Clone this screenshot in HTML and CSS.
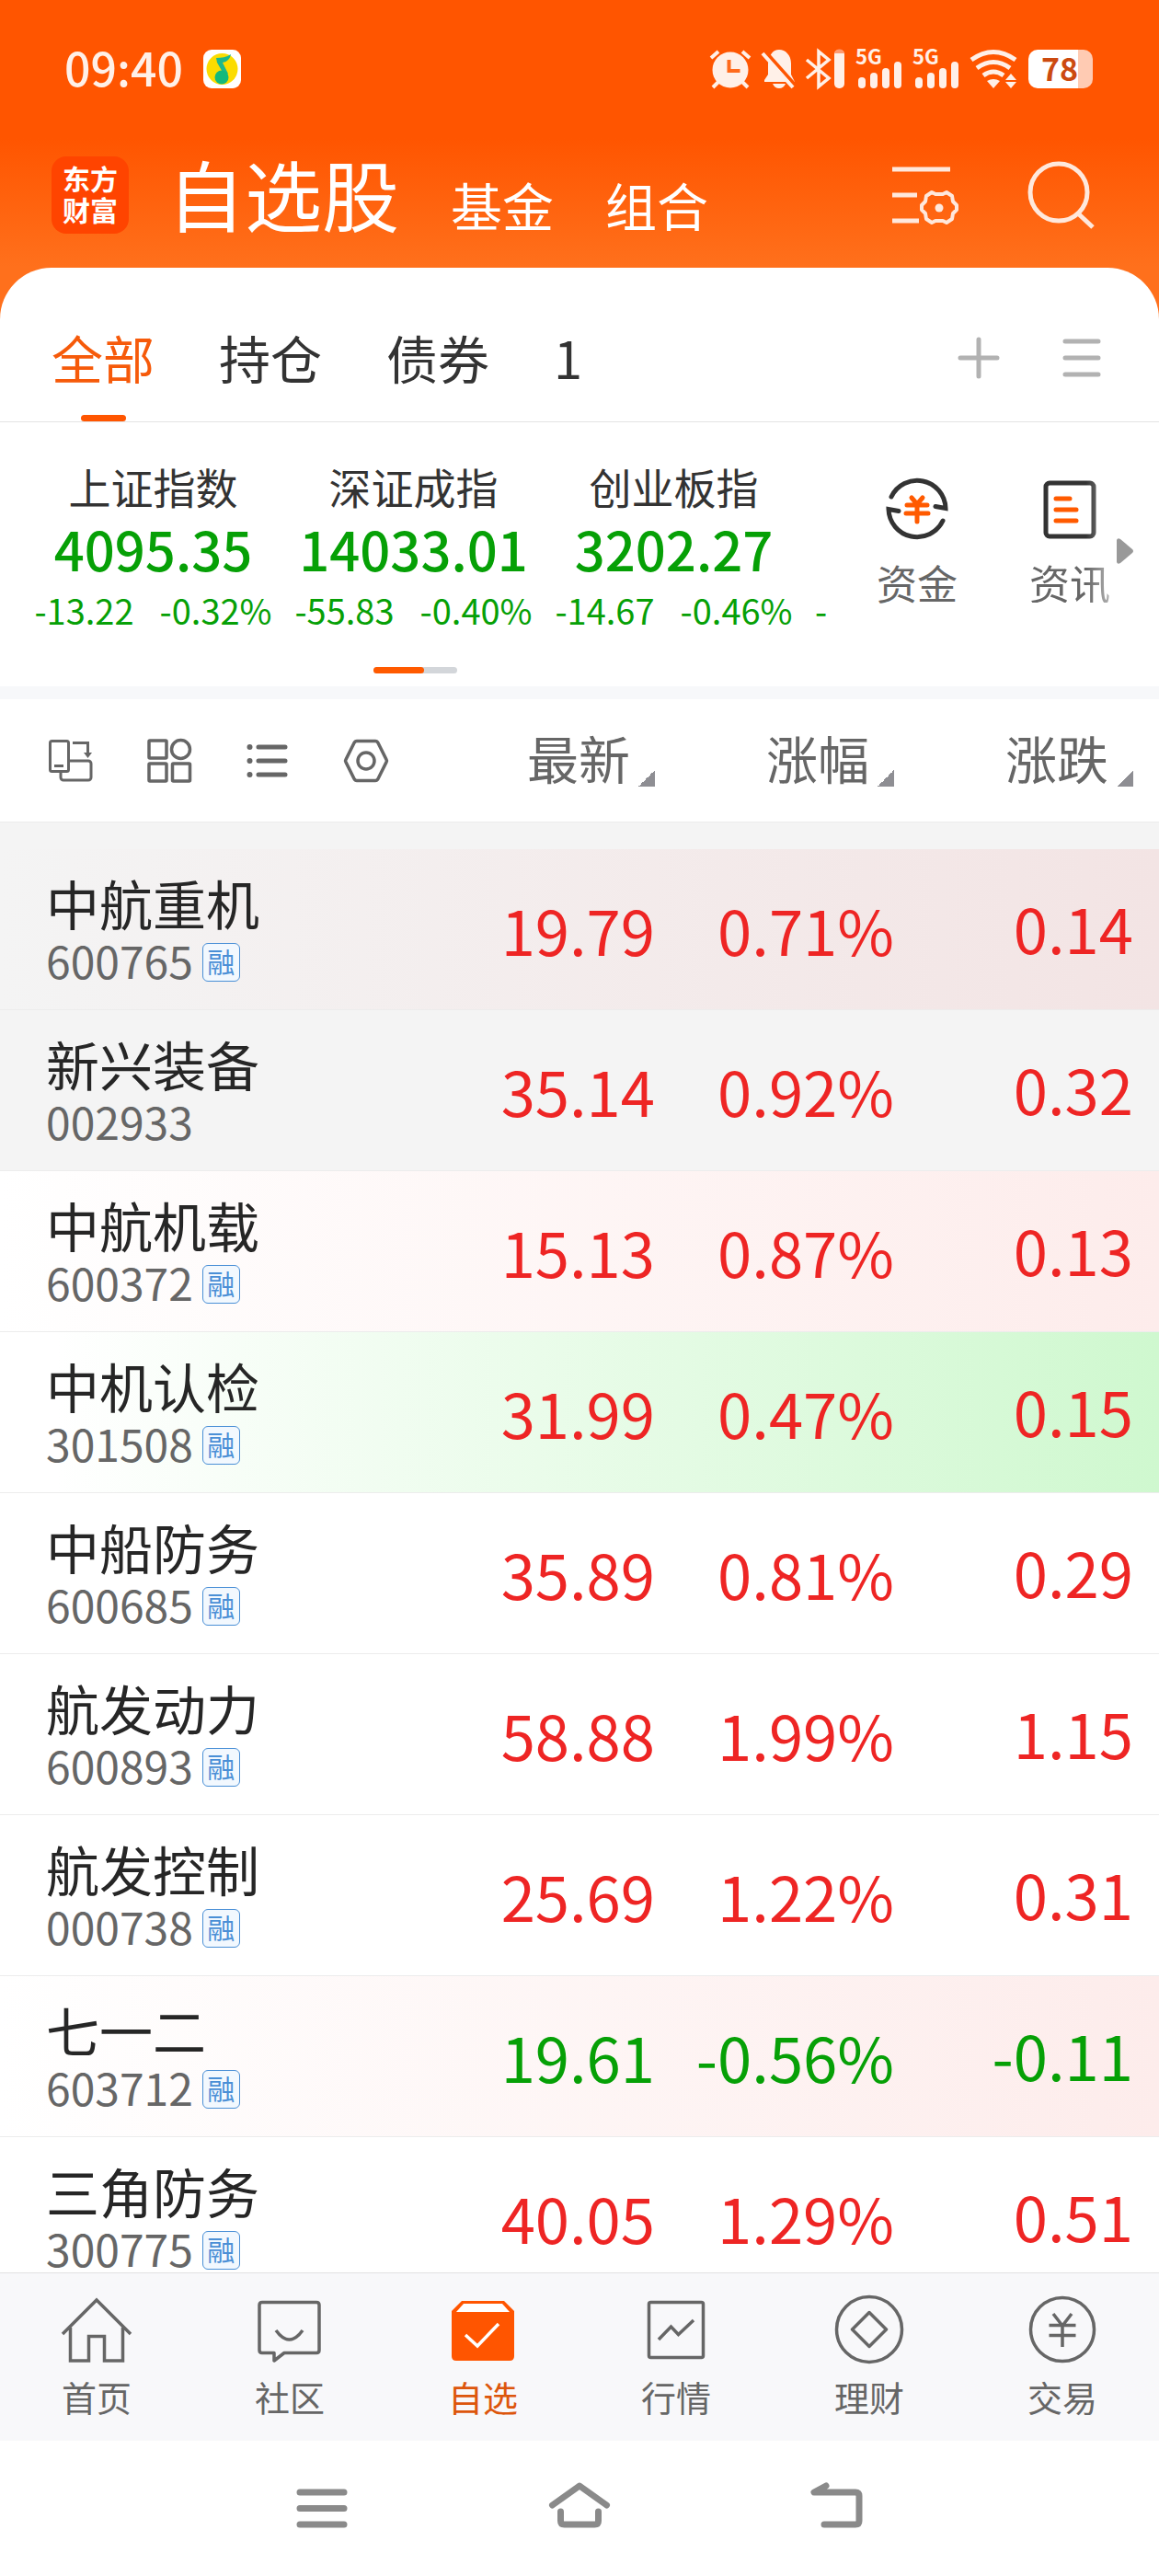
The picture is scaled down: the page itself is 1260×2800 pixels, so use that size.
FILE: index.html
```html
<!DOCTYPE html>
<html lang="zh-CN">
<head>
<meta charset="utf-8">
<meta name="viewport" content="width=device-width, initial-scale=1">
<title>自选股</title>
<link rel="stylesheet" href="styles.css">
</head>
<body>
<div class="app">
  <div class="status">
    <span class="time">09:40</span>
    <svg class="music" width="41" height="42" viewBox="0 0 41 42"><rect width="41" height="42" rx="9" fill="#fff"/><circle cx="20.500" cy="21" r="17" fill="#fbdc00"/><path d="M14 9c6 0 11-1 16-4-1 5-4 8-9 9l6 12-4 2-8-14z" fill="#1cb88c"/><circle cx="20" cy="30" r="7.500" fill="#14b97c"/></svg>
    <div class="status-icons">
      <svg width="44" height="42" viewBox="0 0 44 42"><circle cx="22" cy="22" r="19.500" fill="currentColor"/><g fill="none" stroke="currentColor" stroke-width="4"><path d="M1 9l8-7M43 9l-8-7M9 35l-6 6M35 35l6 6"/></g><path d="M20.500 11v12h12" fill="none" stroke="#ff6a1c" stroke-width="4"/></svg>
      <svg width="36" height="42" viewBox="0 0 36 42"><path d="M3 35v-2l4-6V15C8 6 12 0 19 0s13 6 13 15v12l4 8z" fill="currentColor"/><path d="M12 37h14c-1 3-4 5-7 5s-6-2-7-5z" fill="currentColor"/><path d="M4 2l32 36" stroke="#ff5500" stroke-width="4"/><path d="M1 4l33 37" stroke="currentColor" stroke-width="4"/></svg>
      <svg width="42" height="42" viewBox="0 0 42 42"><path d="M1 11l24 20-11 9V2l11 9L1 31" fill="none" stroke="currentColor" stroke-width="3.500"/><rect x="31" width="11" height="42" rx="5" fill="currentColor"/><path d="M31 4c1-6 10-6 11 0z" fill="#ff9a70"/></svg>
      <svg class="signal" width="50" height="42" viewBox="0 0 50 42"><text x="0" y="16" class="net">5G</text><g fill="currentColor"><rect x="3" y="30" width="8" height="12" rx="4"/><rect x="16" y="25" width="8" height="17" rx="4"/><rect x="29" y="20" width="8" height="22" rx="4"/><rect x="42" y="13" width="8" height="29" rx="4"/></g></svg>
      <svg class="signal" width="50" height="42" viewBox="0 0 50 42"><text x="0" y="16" class="net">5G</text><g fill="currentColor"><rect x="3" y="30" width="8" height="12" rx="4"/><rect x="16" y="25" width="8" height="17" rx="4"/><rect x="29" y="20" width="8" height="22" rx="4"/><rect x="42" y="13" width="8" height="29" rx="4"/></g></svg>
      <svg width="52" height="42" viewBox="0 0 52 42"><g fill="none" stroke="currentColor" stroke-width="5"><path d="M2 11q24-17 48 0M8 20q18-13 36 0M15 28q11-8 22 0"/></g><path d="M19 34q7-4 14 0l-7 8zM39 33l6-7 6 7zM39 35h12l-6 7z" fill="currentColor"/></svg>
      <div class="battery"><span class="battery-level">78</span></div>
    </div>
  </div>

  <header class="head">
    <div class="logo">东方<br>财富</div>
    <nav class="sections">
      <a class="section current" href="#">自选股</a>
      <a class="section" href="#">基金</a>
      <a class="section" href="#">组合</a>
    </nav>
    <div class="head-tools">
      <button aria-label="列表设置"><svg width="72" height="74" viewBox="0 0 72 74"><g fill="none" stroke="currentColor" stroke-width="5"><path d="M0 9h63M0 37h27M0 65h29"/><path stroke-width="4" stroke-linejoin="round" d="M43 34l4 2h8l4-2 6 4 1 6 4 4v5l-4 4-1 6-6 4-4-2h-8l-4 2-6-4-1-6-4-4v-5l4-4 1-6z"/></g><circle cx="51" cy="51" r="4.500" fill="currentColor"/></svg></button>
      <button aria-label="搜索"><svg width="72" height="74" viewBox="0 0 72 74"><g fill="none" stroke="currentColor" stroke-width="5"><circle cx="33" cy="34" r="31"/><path d="M54 57l16 15"/></g></svg></button>
    </div>
  </header>

  <main class="sheet">
    <div class="groups">
      <nav class="group-tabs">
        <a class="group current" href="#">全部</a>
        <a class="group" href="#">持仓</a>
        <a class="group" href="#">债券</a>
        <a class="group" href="#">1</a>
      </nav>
      <button aria-label="添加"><svg width="46" height="46" viewBox="0 0 46 46"><path d="M23 3v40M3 23h40" stroke="currentColor" stroke-width="5" stroke-linecap="round"/></svg></button>
      <button aria-label="管理分组"><svg width="42" height="46" viewBox="0 0 42 46"><path d="M3 5h36M3 23h36M3 41h36" stroke="currentColor" stroke-width="5" stroke-linecap="round"/></svg></button>
    </div>

    <section class="market">
      <div class="market-main">
        <div class="indices">
          <div class="index"><div class="index-name">上证指数</div><div class="index-value">4095.35</div><div class="index-change"><span>-13.22</span><span>-0.32%</span></div></div>
          <div class="index"><div class="index-name">深证成指</div><div class="index-value">14033.01</div><div class="index-change"><span>-55.83</span><span>-0.40%</span></div></div>
          <div class="index"><div class="index-name">创业板指</div><div class="index-value">3202.27</div><div class="index-change"><span>-14.67</span><span>-0.46%</span></div></div>
          <div class="index index-next"><div class="index-change"><span>-</span></div></div>
        </div>
        <div class="pager"><span class="pager-current"></span></div>
      </div>
      <div class="shortcuts">
        <a class="shortcut" href="#"><svg width="68" height="68" viewBox="0 0 68 68"><g fill="none" stroke="#333" stroke-width="5" stroke-linecap="round"><path d="M6 21A31 31 0 0 1 65 33.500l-11-2"/><path d="M62 47A31 31 0 0 1 3 34.500l11 2"/></g><path d="M28 22l6 7 6-7M34 29v19M23 30h22M22 39h24" fill="none" stroke="#ff5a00" stroke-width="5" stroke-linecap="round"/></svg><span>资金</span></a>
        <a class="shortcut fading" href="#"><svg width="68" height="68" viewBox="0 0 68 68"><rect x="8" y="6" width="52" height="58" rx="4" fill="none" stroke="#333" stroke-width="5"/><path d="M19 23h15M19 35h22M19 47h22" stroke="#ff5a00" stroke-width="5" stroke-linecap="round"/></svg><span>资讯</span></a>
        <button class="more" aria-label="更多"><svg width="18" height="28" viewBox="0 0 18 28"><path d="M0 2q1-3 4-1l13 11q2 2 0 4L4 27q-3 2-4-1z" fill="#999"/></svg></button>
      </div>
    </section>

    <div class="list">
      <table class="quotes">
        <thead>
          <tr>
            <th class="tools">
              <button aria-label="横屏"><svg width="48" height="48" viewBox="0 0 48 48"><g fill="none" stroke="currentColor" stroke-width="3"><rect x="1.500" y="2.500" width="20" height="33" rx="2"/><path d="M22 24h21a3 3 0 0 1 3 3v15a3 3 0 0 1-3 3H16a3 3 0 0 1-3-3v-6M6 29.500h10M26 4.500h16.500v12"/></g><path d="M38 15h9l-4.500 6z" fill="currentColor"/></svg></button>
              <button aria-label="宫格"><svg width="48" height="48" viewBox="0 0 48 48"><g fill="none" stroke="currentColor" stroke-width="3.500"><rect x="2" y="2" width="19" height="19" rx="1"/><circle cx="36.500" cy="11.500" r="10"/><rect x="2" y="27" width="19" height="19" rx="1"/><rect x="27.500" y="27" width="19" height="19" rx="1"/></g></svg></button>
              <button aria-label="列表"><svg width="48" height="48" viewBox="0 0 48 48"><path d="M14 9h29M14 24h29M14 39h29" stroke="currentColor" stroke-width="5" stroke-linecap="round"/><g fill="currentColor"><circle cx="4.500" cy="9" r="3"/><circle cx="4.500" cy="24" r="3"/><circle cx="4.500" cy="39" r="3"/></g></svg></button>
              <button aria-label="设置"><svg width="48" height="48" viewBox="0 0 48 48"><g fill="none" stroke="currentColor" stroke-width="3.500"><path d="M14 2.500h20q2 0 3 2l9 18q1 1.500 0 3l-9 18q-1 2-3 2H14q-2 0-3-2l-9-18q-1-1.500 0-3l9-18q1-2 3-2z"/><circle cx="24" cy="24" r="9"/></g></svg></button>
            </th>
            <th><button class="sort">最新</button></th>
            <th><button class="sort">涨幅</button></th>
            <th><button class="sort">涨跌</button></th>
          </tr>
        </thead>
        <tbody>
          <tr class="pinned rising"><td><div class="name">中航重机</div><div class="code">600765<span class="tag">融</span></div></td><td>19.79</td><td>0.71%</td><td>0.14</td></tr>
          <tr class="pinned"><td><div class="name">新兴装备</div><div class="code">002933</div></td><td>35.14</td><td>0.92%</td><td>0.32</td></tr>
          <tr class="rising"><td><div class="name">中航机载</div><div class="code">600372<span class="tag">融</span></div></td><td>15.13</td><td>0.87%</td><td>0.13</td></tr>
          <tr class="falling"><td><div class="name">中机认检</div><div class="code">301508<span class="tag">融</span></div></td><td>31.99</td><td>0.47%</td><td>0.15</td></tr>
          <tr><td><div class="name">中船防务</div><div class="code">600685<span class="tag">融</span></div></td><td>35.89</td><td>0.81%</td><td>0.29</td></tr>
          <tr><td><div class="name">航发动力</div><div class="code">600893<span class="tag">融</span></div></td><td>58.88</td><td>1.99%</td><td>1.15</td></tr>
          <tr><td><div class="name">航发控制</div><div class="code">000738<span class="tag">融</span></div></td><td>25.69</td><td>1.22%</td><td>0.31</td></tr>
          <tr class="rising down"><td><div class="name">七一二</div><div class="code">603712<span class="tag">融</span></div></td><td>19.61</td><td>-0.56%</td><td>-0.11</td></tr>
          <tr><td><div class="name">三角防务</div><div class="code">300775<span class="tag">融</span></div></td><td>40.05</td><td>1.29%</td><td>0.51</td></tr>
        </tbody>
      </table>
    </div>
  </main>

  <nav class="tabbar">
    <a class="tab" href="#"><svg width="76" height="76" viewBox="0 0 76 76"><g fill="none" stroke="currentColor" stroke-width="3.500"><path d="M1 43L38 6l37 37M9.500 36v36h20V45.500h17V72h20V36"/></g></svg><span>首页</span></a>
    <a class="tab" href="#"><svg width="76" height="76" viewBox="0 0 76 76"><g fill="none" stroke="currentColor" stroke-width="3.500" stroke-linejoin="round"><path d="M8 8.500h59q3 0 3 3v49q0 3-3 3H32L21 72v-8.500H8q-3 0-3-3v-49q0-3 3-3z"/><path d="M23 39q14.500 20 29 0"/></g></svg><span>社区</span></a>
    <a class="tab current" href="#"><svg width="76" height="76" viewBox="0 0 76 76"><path d="M4 18L15 7h46l11 11v49q0 5-5 5H9q-5 0-5-5z" fill="currentColor"/><path d="M9 19l8-9h42l8 9z" fill="#fff"/><path d="M19 44l13 12 23-24" fill="none" stroke="#fff" stroke-width="3.500"/></svg><span>自选</span></a>
    <a class="tab" href="#"><svg width="76" height="76" viewBox="0 0 76 76"><g fill="none" stroke="currentColor" stroke-width="3.500"><rect x="8.500" y="8.500" width="59" height="60" rx="2"/><path d="M19 49l13.500-14 8 8.500L57 28"/></g></svg><span>行情</span></a>
    <a class="tab" href="#"><svg width="76" height="76" viewBox="0 0 76 76"><g fill="none" stroke="currentColor" stroke-width="3.500" stroke-linejoin="round"><circle cx="38" cy="38" r="35.500"/><path d="M38 19.500L56.500 38 38 56.500 19.500 38z"/></g></svg><span>理财</span></a>
    <a class="tab" href="#"><svg width="76" height="76" viewBox="0 0 76 76"><g fill="none" stroke="currentColor" stroke-width="3.500"><circle cx="38" cy="38" r="34.500"/><path d="M28 21l10 13 10-13M38 34v23M23.500 33.500h29M23.500 44.500h29"/></g></svg><span>交易</span></a>
  </nav>

  <div class="system">
    <button aria-label="最近任务"><svg width="66" height="56" viewBox="0 0 66 56"><path d="M9 10h48M9 27.500h48M9 45h48" stroke="currentColor" stroke-width="7" stroke-linecap="round"/></svg></button>
    <button aria-label="主屏幕"><svg width="66" height="56" viewBox="0 0 66 56"><path d="M3.500 24L33 3l29.500 21M12.500 31v10q0 4 4 4h33q4 0 4-4V31" fill="none" stroke="currentColor" stroke-width="7" stroke-linecap="round" stroke-linejoin="round"/></svg></button>
    <button aria-label="返回"><svg width="66" height="56" viewBox="0 0 66 56"><path d="M21 3L8 10h45q4 0 4 4v27q0 4-4 4H19" fill="none" stroke="currentColor" stroke-width="7" stroke-linecap="round" stroke-linejoin="round"/></svg></button>
  </div>
</div>
</body>
</html>
```
FILE: styles.css
```css
* {
  box-sizing: border-box;
}

body {
  margin: 0;
  font-family: "Noto Sans CJK SC", "Noto Sans", sans-serif;
  color: #333;
}

a {
  color: inherit;
  text-decoration: none;
}

button {
  display: flex;
  padding: 0;
  border: 0;
  background: none;
  color: inherit;
  font: inherit;
}

svg {
  display: block;
  flex: none;
  overflow: visible;
}

.app {
  display: flex;
  flex-direction: column;
  height: 100vh;
  background: linear-gradient(#ff5500 150px, #ff701c 290px);
}

/* Status bar */
.status {
  display: flex;
  align-items: center;
  height: 150px;
  padding: 0 70px;
  color: #fff0e8;
}

.time {
  font-size: 50px;
  font-weight: 500;
  line-height: 50px;
  padding-bottom: 6px;
}

.music {
  margin-left: 22px;
}

.status-icons {
  display: flex;
  gap: 12px;
  margin-left: auto;
}

.net {
  fill: currentColor;
  font-size: 22px;
  font-weight: 700;
}

.battery {
  width: 70px;
  height: 42px;
  margin-right: 2px;
  border-radius: 10px;
  background: linear-gradient(to right, #fff 54px, #ffcbb3 54px);
}

.battery-level {
  display: block;
  padding-left: 14px;
  color: #cc4a10;
  font-size: 34px;
  font-weight: 700;
  line-height: 39px;
}

/* Header */
.head {
  display: flex;
  align-items: center;
  height: 141px;
  padding: 0 70px 18px 56px;
  color: #fff;
}

.logo {
  width: 84px;
  height: 84px;
  padding-top: 6px;
  border-radius: 16px;
  background: #ff4400;
  font-size: 30px;
  font-weight: 700;
  line-height: 34px;
  text-align: center;
}

.sections {
  display: flex;
  align-items: baseline;
  gap: 56px;
  flex: 1;
  padding: 8px 0 0 42px;
}

.section {
  font-size: 56px;
  line-height: 84px;
}

.section.current {
  font-size: 84px;
}

.head-tools {
  display: flex;
  gap: 76px;
  color: #ffe8dc;
}

/* Sheet */
.sheet {
  display: flex;
  flex: 1;
  flex-direction: column;
  min-height: 0;
  overflow: hidden;
  border-radius: 56px 56px 0 0;
  background: #fff;
}

.groups {
  display: flex;
  align-items: center;
  gap: 68px;
  height: 168px;
  padding: 0 63px 0 56px;
  border-bottom: 1px solid #e4e4e4;
  color: #b2b2b2;
}

.groups button {
  margin-top: 28px;
}

.group-tabs {
  display: flex;
  flex: 1;
  align-self: flex-end;
  gap: 70px;
}

.group {
  display: flex;
  flex-direction: column;
  align-items: center;
  height: 102px;
  color: #333;
  font-size: 56px;
  line-height: 64px;
}

.group.current {
  color: #f65a0a;
}

.group.current::after {
  content: "";
  width: 49px;
  height: 7px;
  margin-top: auto;
  border-radius: 4px;
  background: #ff5500;
}

/* Market indices */
.market {
  display: flex;
  border-bottom: 14px solid #f7f8fa;
}

.market-main {
  flex: 1;
  min-width: 0;
  padding-bottom: 14px;
}

.indices {
  display: flex;
  overflow: hidden;
  padding: 46px 0 20px 25px;
}

.index {
  display: flex;
  flex: none;
  flex-direction: column;
  align-items: center;
  width: 283px;
  color: #06a006;
}

.index-name {
  color: #333;
  font-size: 46px;
  line-height: 46px;
}

.index-value {
  margin: 15px 0 17px;
  font-size: 58px;
  font-weight: 500;
  line-height: 60px;
}

.index-change {
  display: flex;
  gap: 28px;
  font-size: 38px;
  line-height: 40px;
}

.index-next {
  align-items: flex-start;
  justify-content: flex-end;
  padding-left: 12px;
}

.pager {
  width: 91px;
  height: 7px;
  margin: 22px auto 0;
  border-radius: 4px;
  background: #d3d6da;
}

.pager-current {
  display: block;
  width: 55px;
  height: 7px;
  border-radius: 4px;
  background: #ff5a00;
}

.shortcuts {
  display: flex;
  align-items: flex-start;
  padding: 60px 28px 0 50px;
}

.shortcut {
  display: flex;
  flex-direction: column;
  align-items: center;
  gap: 24px;
  color: #666;
  font-size: 44px;
  line-height: 44px;
}

.fading {
  margin-left: 78px;
  -webkit-mask-image: linear-gradient(to right, #000 70%, rgba(0, 0, 0, 0.5));
  mask-image: linear-gradient(to right, #000 70%, rgba(0, 0, 0, 0.5));
}

.more {
  margin: 66px 0 0 7px;
}

/* Quotes */
.list {
  flex: 1;
  min-height: 0;
  overflow: hidden;
}

.quotes,
.quotes thead,
.quotes tbody {
  display: block;
}

.quotes tbody {
  padding-top: 29px;
  background: #f4f4f4;
}

.quotes tr {
  display: grid;
  grid-template-columns: 1fr 260px 260px 260px;
  align-items: center;
  padding: 0 28px 0 50px;
  border-bottom: 1px solid #ececec;
  background: #fff;
}

.quotes thead tr {
  height: 134px;
  color: #666;
}

.quotes th {
  display: flex;
  justify-content: flex-end;
  padding: 0;
  font-weight: 400;
}

.quotes th.tools {
  justify-content: flex-start;
  gap: 59px;
  padding-left: 3px;
}

.sort {
  align-items: flex-end;
  gap: 9px;
  padding-bottom: 8px;
  font-size: 56px;
  line-height: 64px;
}

.sort::after {
  content: "";
  width: 18px;
  height: 18px;
  background: linear-gradient(to bottom right, transparent 50%, #8e8e93 50%);
}

.quotes td {
  padding: 0;
  color: #ee2524;
  font-size: 67px;
  line-height: 68px;
  text-align: right;
}

.quotes td:first-child {
  padding: 28px 0 33px;
  text-align: left;
}

.quotes td:last-child {
  padding-bottom: 4px;
}

.quotes .down td {
  color: #06a006;
}

.quotes .pinned {
  background: #f4f4f4;
}

.quotes .rising {
  background: linear-gradient(to right, #fff, #fdeceb);
}

.quotes .pinned.rising {
  background: linear-gradient(to right, #f4f4f4, #f3e4e4);
}

.quotes .falling {
  background: linear-gradient(to right, #fff 5%, #cff8cf);
}

.quotes .name {
  color: #262626;
  font-size: 58px;
  line-height: 60px;
}

.quotes .code {
  display: flex;
  align-items: center;
  gap: 10px;
  height: 42px;
  margin-top: 11px;
  color: #666;
  font-size: 48px;
  line-height: 42px;
}

.quotes .tag {
  width: 41px;
  height: 42px;
  margin-top: 6px;
  border: 1px solid #4a8fd6;
  border-radius: 6px;
  background: #f2f8fe;
  color: #4a8fd6;
  font-size: 30px;
  line-height: 37px;
  text-align: center;
}

/* Bottom bars */
.tabbar {
  display: grid;
  grid-template-columns: repeat(6, 1fr);
  padding: 23px 0 28px;
  border-top: 1px solid #e2e2e2;
  background: #f8f8fa;
  color: #666;
}

.tab {
  display: flex;
  flex-direction: column;
  align-items: center;
  gap: 15px;
  font-size: 38px;
  line-height: 40px;
}

.tab.current {
  color: #ff5500;
}

.tab.current span {
  color: #dd560c;
}

.system {
  display: grid;
  grid-template-columns: repeat(3, 1fr);
  justify-items: center;
  padding: 46px 16.66% 45px;
  background: #fff;
  color: #8a8a8a;
}
```
